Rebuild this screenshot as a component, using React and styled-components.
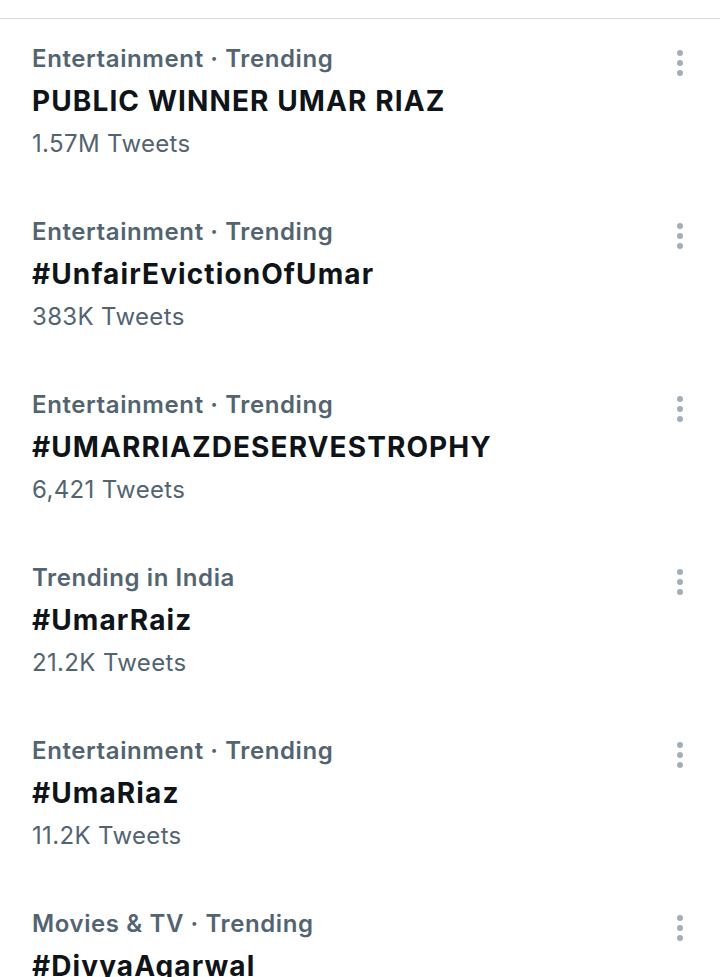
import React from "react";
import styled, { createGlobalStyle } from "styled-components";

const GlobalStyle = createGlobalStyle`
    html, body {
        margin: 0;
        padding: 0;
        background: #ffffff;
    }
    body {
        font-family: Inter, "Noto Sans", sans-serif;
        overflow: hidden;
    }
`;

const StyledPage = styled.div`
    width: 720px;
    height: 977px;
    overflow: hidden;
    padding-top: 18px;
    box-sizing: border-box;
`;

const StyledDivider = styled.div`
    height: 1px;
    background-color: #d6d9db;
`;

const StyledTrend = styled.div`
    display: flex;
    align-items: flex-start;
    justify-content: space-between;
    padding: 19px 37px 27px 32px;
`;

const StyledText = styled.div`
    display: flex;
    flex-direction: column;
`;

const StyledCategory = styled.div`
    color: #536471;
    font-size: 24px;
    font-weight: 600;
    letter-spacing: 0.6px;
    line-height: 42px;
`;

const StyledTitle = styled.div`
    color: #0f1419;
    font-size: 28px;
    font-weight: 700;
    letter-spacing: 1.1px;
    line-height: 43px;
`;

const StyledCount = styled.div`
    color: #536471;
    font-size: 24px;
    font-weight: 400;
    letter-spacing: 0.35px;
    line-height: 42px;
`;

const StyledMore = styled.div`
    display: flex;
    flex-direction: column;
    align-items: center;
    gap: 4px;
    margin-top: 12px;
    span {
        width: 6px;
        height: 6px;
        border-radius: 50%;
        background-color: #a3aeb7;
    }
`;

const trends = [
    { category: "Entertainment · Trending", title: "PUBLIC WINNER UMAR RIAZ", count: "1.57M Tweets" },
    { category: "Entertainment · Trending", title: "#UnfairEvictionOfUmar", count: "383K Tweets" },
    { category: "Entertainment · Trending", title: "#UMARRIAZDESERVESTROPHY", count: "6,421 Tweets" },
    { category: "Trending in India", title: "#UmarRaiz", count: "21.2K Tweets" },
    { category: "Entertainment · Trending", title: "#UmaRiaz", count: "11.2K Tweets" },
    { category: "Movies & TV · Trending", title: "#DivyaAgarwal", count: "" },
];

function Trend({ category, title, count }) {
    return (
        <StyledTrend>
            <StyledText>
                <StyledCategory>{category}</StyledCategory>
                <StyledTitle>{title}</StyledTitle>
                {count && <StyledCount>{count}</StyledCount>}
            </StyledText>
            <StyledMore>
                <span />
                <span />
                <span />
            </StyledMore>
        </StyledTrend>
    );
}

export default function App() {
    return (
        <StyledPage>
            <GlobalStyle />
            <StyledDivider />
            {trends.map((t, i) => (
                <Trend key={i} {...t} />
            ))}
        </StyledPage>
    );
}
